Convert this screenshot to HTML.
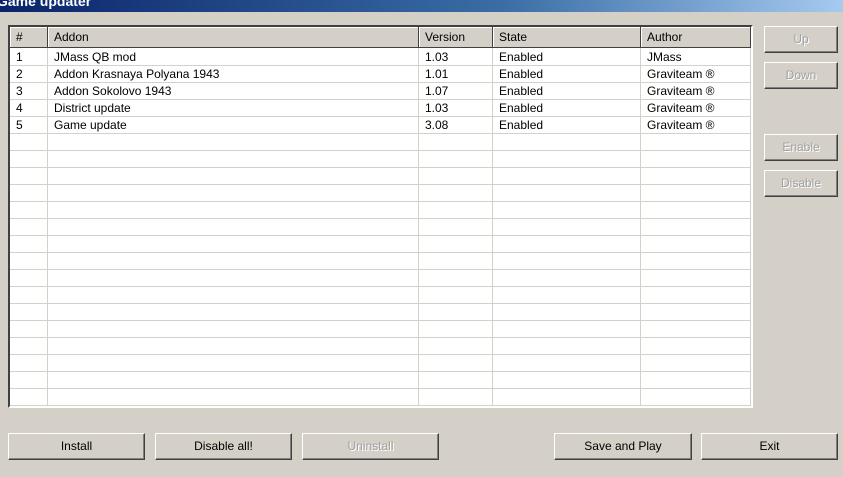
<!DOCTYPE html>
<html><head><style>
body{margin:0;width:843px;height:477px;background:#d4d0c8;position:relative;overflow:hidden;font-family:"Liberation Sans",sans-serif;font-size:12px;}
.title{position:absolute;left:0;top:0;width:843px;height:12px;background:linear-gradient(90deg,#0a246a,#3a6ea5 60%,#a6caf0);overflow:hidden}
.title span{position:absolute;left:-3px;top:-7px;color:#fff;font-weight:bold;font-size:14px}
.tbl{position:absolute;left:8px;top:25px;width:741px;height:379px;background:#fff;border:2px solid;border-color:#404040 #fff #fff #404040;overflow:hidden}
.hdr{position:absolute;top:0;height:21px;background:#d4d0c8;border-right:1px solid #404040;border-bottom:1px solid #404040;box-shadow:inset 1px 1px 0 #fff;box-sizing:border-box;padding:3px 0 0 6px}
.cell{position:absolute;height:17px;line-height:17px;padding-left:6px;box-sizing:border-box}
.vl{position:absolute;top:21px;bottom:0;width:1px;background:#d0d4c8}
.hl{position:absolute;left:0;right:0;height:1px;background:#d0d4c8}
.btn{position:absolute;height:27px;box-sizing:border-box;border:1px solid;border-color:#fff #404040 #404040 #fff;box-shadow:inset -1px -1px 0 #808080;text-align:center;line-height:25px;color:#000}
.dis{color:#a0a0a0;text-shadow:1px 1px 0 #fff}
</style></head><body>
<div class="title"><span>Game updater</span></div>
<div class="tbl">
<div class="hdr" style="left:0;width:38px">#</div>
<div class="hdr" style="left:38px;width:371px">Addon</div>
<div class="hdr" style="left:409px;width:74px">Version</div>
<div class="hdr" style="left:483px;width:148px">State</div>
<div class="hdr" style="left:631px;width:110px">Author</div>
<div class="vl" style="left:37px"></div><div class="vl" style="left:408px"></div><div class="vl" style="left:482px"></div><div class="vl" style="left:630px"></div><div class="vl" style="left:740px"></div>
<div id="rows"></div>
</div>
<script>
var d=[["1","JMass QB mod","1.03","Enabled","JMass"],["2","Addon Krasnaya Polyana 1943","1.01","Enabled","Graviteam ®"],["3","Addon Sokolovo 1943","1.07","Enabled","Graviteam ®"],["4","District update","1.03","Enabled","Graviteam ®"],["5","Game update","3.08","Enabled","Graviteam ®"]];
var L=[0,38,409,483,631],h="";
for(var i=0;i<22;i++){var y=22+i*17;h+='<div class="hl" style="top:'+(y+16)+'px"></div>';
if(d[i])for(var j=0;j<5;j++)h+='<div class="cell" style="top:'+y+'px;left:'+L[j]+'px">'+d[i][j]+'</div>';}
document.getElementById("rows").innerHTML=h;
</script>
<div class="btn dis" style="left:764px;top:26px;width:74px">Up</div>
<div class="btn dis" style="left:764px;top:62px;width:74px">Down</div>
<div class="btn dis" style="left:764px;top:134px;width:74px">Enable</div>
<div class="btn dis" style="left:764px;top:170px;width:74px">Disable</div>
<div class="btn" style="left:8px;top:433px;width:137px">Install</div>
<div class="btn" style="left:155px;top:433px;width:137px">Disable all!</div>
<div class="btn dis" style="left:302px;top:433px;width:137px">Uninstall</div>
<div class="btn" style="left:554px;top:433px;width:138px">Save and Play</div>
<div class="btn" style="left:701px;top:433px;width:137px">Exit</div>
</body></html>
